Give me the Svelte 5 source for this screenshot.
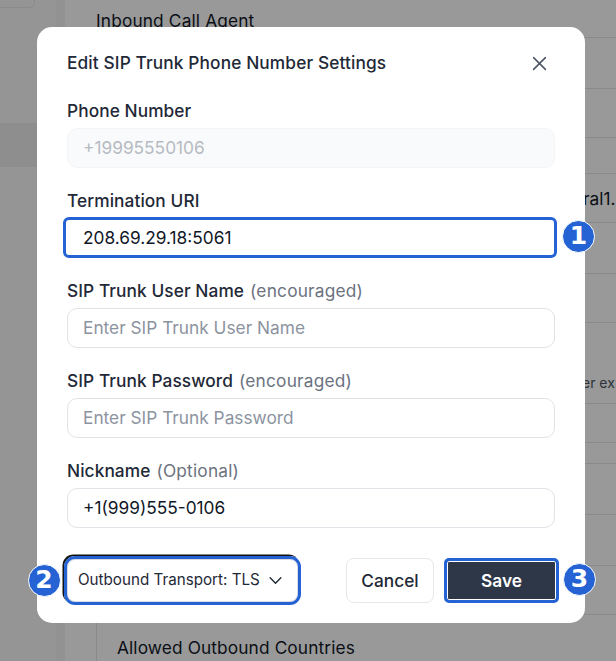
<script>
  const fields = [
    { label: 'Phone Number', value: '+19995550106', disabled: true },
    { label: 'Termination URI', value: '208.69.29.18:5061', marked: true },
    { label: 'SIP Trunk User Name', hint: '(encouraged)', placeholder: 'Enter SIP Trunk User Name' },
    { label: 'SIP Trunk Password', hint: '(encouraged)', placeholder: 'Enter SIP Trunk Password' },
    { label: 'Nickname', hint: '(Optional)', value: '+1(999)555-0106' }
  ];
  const rowHeights = [51, 49, 36, 49, 51, 49, 81, 39, 21, 51, 51, 49];
</script>

<div class="page">
  <aside class="sidebar">
    <div class="side-top"></div>
    <div class="side-item"></div>
  </aside>
  <div class="rail"></div>
  <main class="main">
    <div class="content">
      <div class="heading">Inbound Call Agent</div>
      <div class="rows">
        {#each rowHeights as h}
          <div class="row" style="height: {h}px"></div>
        {/each}
      </div>
      <div class="peek peek-a">ral1.</div>
      <div class="peek peek-b">er ex</div>
      <div class="bottom">Allowed Outbound Countries</div>
    </div>
  </main>
  <div class="scrim"></div>

  <div class="modal">
    <header class="head">
      <h2>Edit SIP Trunk Phone Number Settings</h2>
      <svg class="close" viewBox="0 0 14 14" width="15" height="15" fill="none" stroke="#4b5563" stroke-width="1.4" stroke-linecap="round">
        <path d="M1.5 1.5l11 11M12.5 1.5l-11 11" />
      </svg>
    </header>

    <div class="fields">
      {#each fields as f}
        <div class="field">
          <div class="label">{f.label}{#if f.hint}<span class="hint">{f.hint}</span>{/if}</div>
          <div class="input" class:disabled={f.disabled} class:marked={f.marked} class:ph={f.placeholder}>
            {f.value ?? f.placeholder}
            {#if f.marked}<span class="badge b1">1</span>{/if}
          </div>
        </div>
      {/each}
    </div>

    <footer class="foot">
      <div class="select">
        <span class="badge b2">2</span>
        <span class="select-text">Outbound Transport: TLS</span>
        <svg viewBox="0 0 14 14" width="15" height="15" fill="none" stroke="#1f2937" stroke-width="1.3" stroke-linecap="round" stroke-linejoin="round">
          <path d="M2 4.5l5 5 5-5" />
        </svg>
      </div>
      <div class="btns">
        <div class="cancel">Cancel</div>
        <div class="save">Save<span class="badge b3">3</span></div>
      </div>
    </footer>
  </div>
</div>

<style>
  :global(body) { margin: 0; }
  .page {
    position: relative;
    width: 616px;
    height: 661px;
    overflow: hidden;
    display: flex;
    background: #fff;
    font-family: Inter, "Liberation Sans", sans-serif;
    color: #111827;
  }
  .sidebar { width: 56px; flex: none; background: #f8f8f9; }
  .rail { width: 9px; flex: none; background: #f4f4f5; }
  .side-top { height: 8px; width: 35px; border: 1px solid #e5e7eb; border-top: 0; border-left: 0; border-radius: 0 0 6px 0; box-sizing: border-box; }
  .side-item { margin-top: 115px; height: 44px; background: #ededee; }
  .main { flex: 1; min-width: 0; padding-left: 31px; }
  .content { position: relative; height: 100%; }
  .heading { font-size: 17.3px; letter-spacing: 0.15px; line-height: 20px; font-weight: 400; padding-top: 11px; height: 38px; box-sizing: border-box; white-space: nowrap; border-bottom: 1px solid #e5e7eb; }
  .row { box-sizing: border-box; border-bottom: 1px solid #e5e7eb; }
  .peek { position: absolute; line-height: 20px; white-space: nowrap; }
  .peek-a { left: 487px; top: 189px; font-size: 17.3px; }
  .peek-b { left: 486px; top: 373px; font-size: 14px; color: #4b5563; }
  .bottom {
    position: absolute;
    left: 0;
    top: 615px;
    bottom: 0;
    box-sizing: border-box;
    padding: 23px 0 0 20px;
    line-height: 20px;
    font-size: 17.3px;
    letter-spacing: 0.12px;
    border-left: 1px solid #e5e7eb;
    white-space: nowrap;
  }
  .scrim { position: absolute; inset: 0; background: rgba(0, 0, 0, 0.4); }

  .modal {
    position: absolute;
    left: 37px;
    top: 27px;
    width: 548px;
    height: 596px;
    box-sizing: border-box;
    padding: 24px 30px 0;
    background: #fff;
    border-radius: 15px;
  }
  .head { display: flex; justify-content: space-between; align-items: center; height: 24px; padding-right: 8px; }
  h2 { margin: 0; font-size: 17.3px; letter-spacing: 0.12px; font-weight: 500; line-height: 24px; color: #1f2937; }
  .close { flex: none; }
  .fields { display: flex; flex-direction: column; gap: 16px; margin-top: 19px; }
  .field { height: 74px; display: flex; flex-direction: column; }
  .label { height: 34px; flex: none; line-height: 34px; font-size: 17.3px; letter-spacing: 0.08px; font-weight: 500; color: #1f2937; white-space: nowrap; }
  .hint { font-weight: 400; color: #6b7280; margin-left: 6px; letter-spacing: 0.2px; }
  .input {
    position: relative;
    flex: none;
    box-sizing: border-box;
    width: 488px;
    height: 40px;
    line-height: 38px;
    padding-left: 15px;
    border: 1px solid #e1e3e8;
    border-radius: 10px;
    font-size: 17.3px;
    color: #111827;
  }
  .disabled { background: #f9fafb; border-color: #f3f4f6; color: #b6bac2; }
  .ph { color: #8c93a0; }
  .marked {
    border: 3px solid #2563d4;
    border-radius: 6px;
    width: 494px;
    height: 41px;
    margin: -1px 0 0 -4px;
    padding-left: 17px;
    line-height: 35px;
  }
  .foot { display: flex; justify-content: space-between; align-items: center; margin-top: 29px; height: 46px; }
  .select {
    position: relative;
    flex: none;
    box-sizing: border-box;
    width: 237px;
    height: 49px;
    margin-left: -3px;
    display: flex;
    align-items: center;
    gap: 8px;
    padding-left: 11px;
    border: 3px solid #2563d4;
    border-radius: 11px;
    box-shadow: inset 0 0 0 1px #d9dbe0, -1.5px -1.5px 0 #111;
    color: #1f2937;
    white-space: nowrap;
  }
  .select-text { font-size: 15.2px; line-height: 20px; margin-top: -1px; }
  .btns { display: flex; align-items: center; gap: 10px; margin-right: -4px; }
  .cancel {
    box-sizing: border-box;
    width: 88px;
    height: 45px;
    line-height: 43px;
    text-align: center;
    border: 1px solid #e5e7eb;
    border-radius: 8px;
    font-size: 17.3px;
    font-weight: 500;
    color: #1f2937;
  }
  .save {
    position: relative;
    box-sizing: border-box;
    width: 115px;
    height: 45px;
    line-height: 39px;
    text-align: center;
    background: #2d3748;
    border: 3px solid #2563d4;
    box-shadow: inset 0 0 0 1px #fff;
    border-radius: 5px;
    color: #fff;
    font-size: 17.3px;
    font-weight: 600;
  }
  .badge {
    position: absolute;
    box-sizing: border-box;
    width: 33px;
    height: 33px;
    border-radius: 50%;
    background: #2563d4;
    border: 1.5px solid #fff;
    color: #fff;
    font-family: "DejaVu Sans", sans-serif;
    font-weight: 700;
    font-size: 25px;
    line-height: 29px;
    text-align: center;
  }
  .b1 { left: 496px; top: 0; }
  .b2 { left: -39.5px; top: 5px; }
  .b3 { left: 116px; top: 2px; }
</style>
